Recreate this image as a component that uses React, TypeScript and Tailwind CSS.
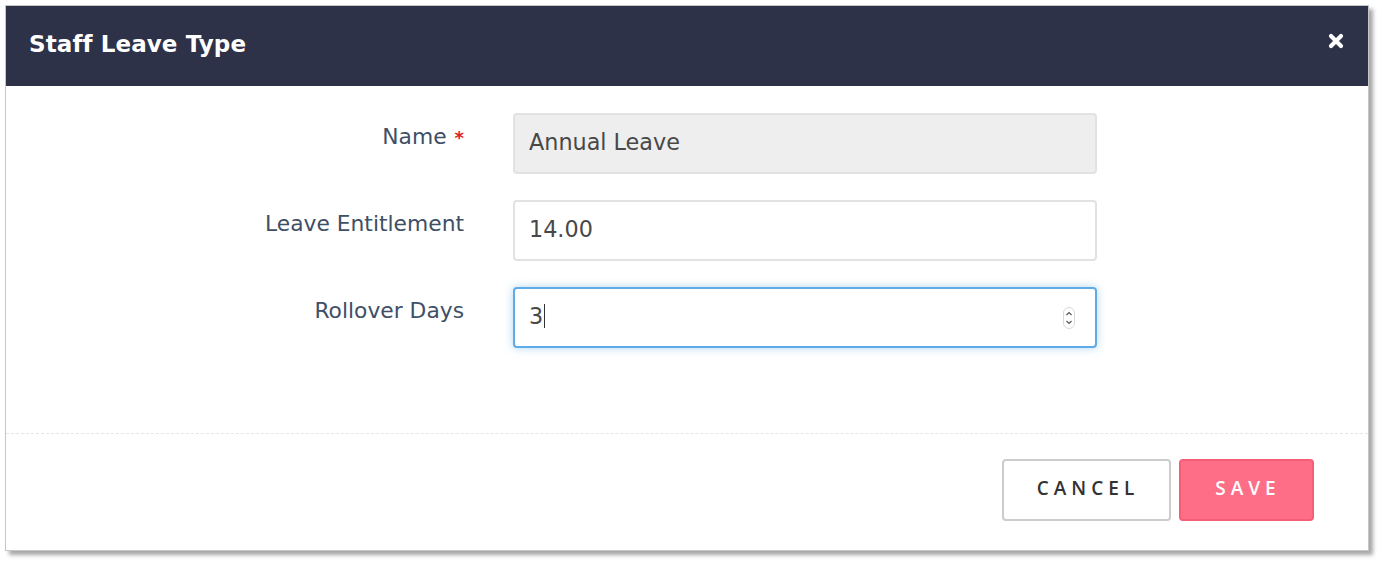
import React from "react";

const font = { fontFamily: '"DejaVu Sans", "Open Sans", sans-serif' };
const btnFont = { fontFamily: '"Open Sans", "DejaVu Sans", sans-serif' };

function CloseIcon() {
  return (
    <svg width="16" height="16" viewBox="0 0 16 16" aria-hidden="true">
      <path d="M3 3 L13 13 M13 3 L3 13" stroke="#ffffff" strokeWidth="4.2" strokeLinecap="round" />
    </svg>
  );
}

function Spinner() {
  return (
    <svg width="12" height="22" viewBox="0 0 12 22" aria-hidden="true">
      <rect x="0.5" y="0.5" width="11" height="21" rx="5.5" fill="#fff" stroke="#d8d8d8" />
      <path d="M3.5 8 L6 5.5 L8.5 8" fill="none" stroke="#555" strokeWidth="1.2" />
      <path d="M3.5 14 L6 16.5 L8.5 14" fill="none" stroke="#555" strokeWidth="1.2" />
    </svg>
  );
}

function Row({ label, required, children }: { label: string; required?: boolean; children: React.ReactNode }) {
  return (
    <div className="flex items-start">
      <div className="w-[458px] pt-[11px] text-right text-[21.8px] leading-[26px] text-[#3e4f66]">
        {label}
        {required && <span className="ml-[8px] text-[#e02020] font-bold text-[18px]">*</span>}
      </div>
      <div className="ml-[49px] w-[584px]">{children}</div>
    </div>
  );
}

export default function App() {
  return (
    <div className="w-full h-[564px] bg-white pt-[5px] pl-[5px]" style={font}>
      <div className="w-[1364px] h-[546px] bg-white border border-[#c6c6c6] shadow-[4px_4px_4px_rgba(0,0,0,0.35)] flex flex-col">
        <div className="h-[80px] bg-[#2d3249] flex items-center justify-between pl-[23px] pr-[24px]">
          <h1 className="text-white text-[23px] leading-[26px] font-bold tracking-[0.1px] -mt-[4px]">Staff Leave Type</h1>
          <button className="-mt-[10px]"><CloseIcon /></button>
        </div>
        <div className="flex-1 pt-[27px] flex flex-col gap-[26px]">
          <Row label="Name" required>
            <div className="h-[61px] rounded-[4px] bg-[#eeeeee] border-2 border-[#e2e2e2] flex items-center px-[14px] pb-[4px] text-[22.3px] leading-[26px] text-[#484848]">
              Annual Leave
            </div>
          </Row>
          <Row label="Leave Entitlement">
            <div className="h-[61px] rounded-[4px] bg-white border-2 border-[#e2e2e2] flex items-center px-[14px] pb-[4px] text-[22.3px] leading-[26px] text-[#484848]">
              14.00
            </div>
          </Row>
          <Row label="Rollover Days">
            <div className="h-[61px] rounded-[4px] bg-white border-2 border-[#5fabe8] shadow-[0_0_8px_rgba(102,175,233,0.5)] flex items-center justify-between pl-[14px] pr-[20px] text-[22.3px] leading-[26px] text-[#484848]">
              <span className="flex items-center pb-[4px]">
                3<span className="inline-block w-[1px] h-[24px] bg-[#333] ml-[1px]"></span>
              </span>
              <Spinner />
            </div>
          </Row>
        </div>
        <div className="border-t border-dashed border-[#e6e6e6] h-[117px] flex justify-end items-start pt-[25px] pr-[54px] gap-[8px]" style={btnFont}>
          <button className="w-[169px] h-[62px] pb-[4px] pl-[3px] rounded-[4px] border-2 border-[#cccccc] bg-white text-[#333] text-[19px] font-semibold tracking-[5px]">
            CANCEL
          </button>
          <button className="w-[135px] h-[62px] pb-[4px] pl-[3px] rounded-[4px] border-2 border-[#f65e78] bg-[#ff6e87] text-white text-[19px] font-semibold tracking-[5px]">
            SAVE
          </button>
        </div>
      </div>
    </div>
  );
}
